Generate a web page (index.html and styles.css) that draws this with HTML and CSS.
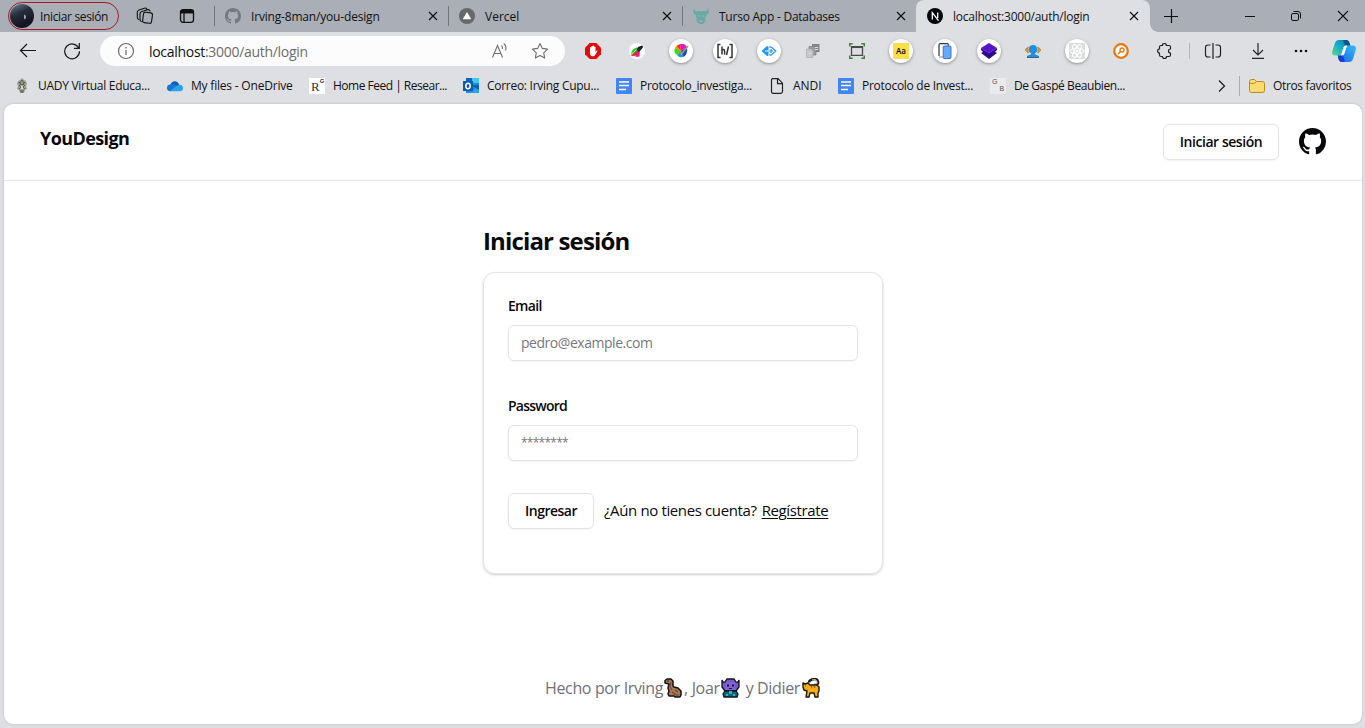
FILE: index.html
```html
<!DOCTYPE html>
<html lang="es">
<head>
<meta charset="utf-8">
<title>localhost:3000/auth/login</title>
<link rel="stylesheet" href="styles.css">
</head>
<body>
<div class="browser">
  <div class="tabbar">
    <div class="profile"><span class="avatar"></span><span class="profile-name">Iniciar sesión</span></div>
    <svg class="workspaces" width="18" height="18" viewBox="0 0 18 18" fill="none" stroke="#111" stroke-width="1.1" stroke-linejoin="round" stroke-linecap="round"><rect x="7" y="5.500" width="9" height="10.500" rx="2" transform="rotate(8 11.500 11)"/><path d="M5.300 14.500Q4 14 4 12.500V7Q4 5 5.800 4.500L11.500 2.700Q13.300 2.200 14 4M2.800 12.500Q1.300 12 1.300 10.500V5.500Q1.300 3.700 3 3L8.300 1.200Q10 .700 10.800 2"/></svg>
    <svg class="tabactions" width="16" height="16" viewBox="0 0 16 16" fill="none" stroke="#111" stroke-width="1.3"><rect x="1.500" y="1.700" width="13" height="12.600" rx="2.500"/><path d="M1.500 3.700h13" stroke-width="3.500"/><path d="M5 5v9"/></svg>
    <div class="tab">
      <svg width="16" height="16" viewBox="0 0 16 16" fill="#747982"><path d="M8 0C3.580 0 0 3.580 0 8c0 3.540 2.290 6.530 5.470 7.590.4.070.55-.17.55-.38v-1.490c-2.010.37-2.530-.49-2.690-.94-.09-.23-.48-.94-.82-1.130-.28-.15-.68-.52-.01-.53.63-.01 1.080.58 1.230.82.72 1.210 1.870.87 2.330.66.070-.52.28-.87.51-1.070-1.780-.2-3.640-.89-3.640-3.950 0-.87.31-1.590.82-2.150-.08-.2-.36-1.020.08-2.120 0 0 .67-.21 2.200.82a7.500 7.500 0 0 1 4 0c1.530-1.040 2.200-.82 2.200-.82.44 1.100.16 1.920.08 2.120.51.56.82 1.270.82 2.150 0 3.070-1.870 3.750-3.650 3.950.29.25.54.73.54 1.480v2.200c0 .21.15.46.55.38A8 8 0 0 0 16 8c0-4.420-3.580-8-8-8z"/></svg>
      <span class="tab-title t1">Irving-8man/you-design</span>
      <svg class="close" width="10" height="10" viewBox="0 0 10 10" stroke="#111" stroke-width="1.200"><path d="m1 1 8 8M9 1 1 9"/></svg>
    </div>
    <div class="tab">
      <svg width="16" height="16" viewBox="0 0 16 16"><circle cx="8" cy="8" r="8" fill="#666869"/><path d="m8 4 4.300 7.200H3.700z" fill="#fff"/></svg>
      <span class="tab-title t2">Vercel</span>
      <svg class="close" width="10" height="10" viewBox="0 0 10 10" stroke="#111" stroke-width="1.200"><path d="m1 1 8 8M9 1 1 9"/></svg>
    </div>
    <div class="tab">
      <svg width="16" height="16" viewBox="0 0 16 16"><path d="M1.500.5 2 3l2 .5 1-1 3 1 3-1 1 1 2-.5.500-2.500L16 3.500l-1 2.500-2 .5.500 1.500-1 1v4L10 16H6l-2.500-3V9l-1-1L3 6.500 1 6 0 3.500z" fill="#68aaa5"/><path d="m4.800 7 2 .8v1l-2-.5zm6.400 0-2 .8v1l2-.5zM6 12.500h4l-1 1.500H7z" fill="#aaaeb6"/></svg>
      <span class="tab-title t3">Turso App - Databases</span>
      <svg class="close" width="10" height="10" viewBox="0 0 10 10" stroke="#111" stroke-width="1.200"><path d="m1 1 8 8M9 1 1 9"/></svg>
    </div>
    <div class="tab active">
      <svg width="16" height="16" viewBox="0 0 16 16"><circle cx="8" cy="8" r="8" fill="#050505"/><path d="M5.300 11.500V4.700l6.200 8M10.700 4.500v5.500" fill="none" stroke="#fff" stroke-width="1.300"/></svg>
      <span class="tab-title t4">localhost:3000/auth/login</span>
      <svg class="close" width="10" height="10" viewBox="0 0 10 10" stroke="#111" stroke-width="1.200"><path d="m1 1 8 8M9 1 1 9"/></svg>
    </div>
    <svg class="newtab" width="14" height="14" viewBox="0 0 14 14" stroke="#111" stroke-width="1.200"><path d="M7.500 0v14M0 7.500h14"/></svg>
    <div class="window-controls">
      <svg width="10" height="10" viewBox="0 0 10 10" stroke="#111"><path d="M0 5.500h10"/></svg>
      <svg width="12" height="12" viewBox="0 0 12 12" fill="none" stroke="#111"><rect x="1.500" y="3.500" width="7" height="7" rx="1.500"/><path d="M3.500 1.500H8a2.500 2.500 0 0 1 2.500 2.500v4.500"/></svg>
      <svg width="12" height="12" viewBox="0 0 12 12" stroke="#111" stroke-width="1.100"><path d="m1 1 10 10M11 1 1 11"/></svg>
    </div>
  </div>

  <div class="toolbar">
    <svg class="back" width="18" height="16" viewBox="0 0 18 16" fill="none" stroke="#151515" stroke-width="1.200"><path d="M17 7.500H1.500M8 1 1.500 7.500 8 14"/></svg>
    <svg class="reload" width="18" height="18" viewBox="0 0 18 18" fill="none" stroke="#151515" stroke-width="1.200"><path d="M15.800 6.200A7.400 7.400 0 1 0 16.500 9.300M16.300 1v5.300H11"/></svg>
    <div class="address">
      <svg width="18" height="18" viewBox="0 0 18 18" fill="none" stroke="#6b6b6b" stroke-width="1.200"><circle cx="9" cy="9" r="7.500"/><path d="M9 8v5M9 5v1.500"/></svg>
      <span class="url"><b>localhost</b>:3000/auth/login</span>
      <svg class="read" width="18" height="18" viewBox="0 0 18 18" fill="none" stroke="#707070" stroke-width="1.100"><path d="m1.500 15.500 5-12 5 12M3.300 11.500h6.500M10.500 3.500q1.500 1.500.8 3.500M12.700 1.500q3.300 2.800 1.800 7"/></svg>
      <svg class="star" width="18" height="18" viewBox="0 0 18 18" fill="none" stroke="#707070" stroke-width="1.100" stroke-linejoin="round"><path d="m9 1.500 2.300 4.900 5.300.7-3.900 3.700 1 5.300L9 13.500l-4.700 2.600 1-5.300-3.900-3.700 5.300-.7z"/></svg>
    </div>
    <div class="extensions">
      <div class="ext"><svg width="16" height="16" viewBox="0 0 16 16"><path d="M4.700 0h6.600L16 4.700v6.600L11.300 16H4.700L0 11.300V4.700z" fill="#e40b0b"/><path d="M5 8V4.500q.7-.8 1.300 0V7 3.300q.7-.8 1.400 0V7 2.800q.7-.8 1.400 0V7 4q.7-.8 1.400 0v5l1-1.300q1-.4 1 .4L9.800 12.500q-.5.700-1.500.7H7.300Q5 13 5 10z" fill="#fff"/></svg></div>
      <div class="ext"><svg width="16" height="16" viewBox="0 0 16 16"><circle cx="8" cy="8" r="8" fill="#fff"/><path d="M2 12.500Q2 5.500 8 4.500L9 8z" fill="#12d83b"/><path d="M2 12.500 9 7l1 3q-2 3-6 3z" fill="#f0163c"/><path d="m9 7 2 0-.5 6.500-4 .5z" fill="#f0198a"/><path d="m7.500 6.500 1.500-2.500 4-1.500 1.200 1.200-2 3L9.500 9z" fill="#16251a"/><path d="m2.500 11.500 5-5" stroke="#ffec38" stroke-width=".8"/></svg></div>
      <div class="ext round"><svg width="15" height="14" viewBox="0 0 15 14"><path d="m7 7-6-3q2-4 5-3z" fill="#ff8a00"/><path d="M7 7 6 0q5-1 7 3z" fill="#ea14d0"/><path d="m7 7-6-3q-2 5 2 7z" fill="#35dc10"/><path d="m7 7-4 4q2 3 6 2z" fill="#20a3ba"/><path d="m7 7 6-4q1 8-4 10z" fill="#213ddd"/><path d="m7 7-4-5 3-2z" fill="#ff2920"/><path d="m5 7 2.500 3L14 2" fill="none" stroke="#92a65a" stroke-width="1.600"/></svg></div>
      <div class="ext round"><svg width="18" height="18" viewBox="0 0 18 18" fill="none" stroke="#333" stroke-width="1.500"><path d="M4.500 2.500H2v13h2.500M13.500 2.500H16v13h-2.500M6 4.500v8M6 9q0-1.500 1.300-1.500T8.600 9v3.500M12.500 4.500l-2 8.500"/></svg></div>
      <div class="ext round"><svg width="18" height="14" viewBox="0 0 18 14"><path d="m1.500 7 5-4.500Q8.500 1 8.500 3.500v7q0 2.500-2 1z" fill="#2196f3"/><path d="M9.800 4q0-2 1.700-.7L15.800 7l-4.300 3.700q-1.700 1.300-1.700-.7" fill="none" stroke="#2196f3" stroke-width="1.200"/><path d="M9 7h4M11 5v4" stroke="#2196f3" stroke-width="1.200"/><path d="M5 7h3.500" stroke="#fff"/></svg></div>
      <div class="ext"><svg width="14" height="14" viewBox="0 0 14 14"><path d="M6 0h7.500v8H6z" fill="#858585"/><path d="M3 2.500h7V11H3z" fill="#9c9c9c" stroke="#7c7c7c" stroke-width=".7"/><path d="M.5 5H5l2 2v6.500H.5z" fill="#c8c8c8" stroke="#aaa" stroke-width=".7"/><path d="M9 3.500h3M9 5.500h3M3 9.500h2" stroke="#dedede"/></svg></div>
      <div class="ext"><svg width="16" height="16" viewBox="0 0 16 16" fill="none"><path d="M.7 3.500V.7h3M12.300.7h3v2.800M15.300 12.500v2.800h-3M3.700 15.300h-3v-2.800" stroke="#3b8538" stroke-width="1.500"/><path d="M2.500 3.700h11v8.600h-11z" stroke="#484b49" stroke-width="1.300"/><path d="M2.500 4.200h11" stroke="#484b49" stroke-width="1.700"/></svg></div>
      <div class="ext round"><span class="aa">Aa</span></div>
      <div class="ext round"><svg width="16" height="16" viewBox="0 0 16 16"><path d="M2 13V2q0-1.300 1.300-1.300h7q1 0 1 1.300v1" fill="#fff" stroke="#293444" stroke-width="1.200"/><path d="M2 13v2h4v-2z" fill="#c5c9cd"/><rect x="6.200" y="3" width="7.800" height="12.500" rx="1" fill="#68a9f9" stroke="#3d76bc"/></svg></div>
      <div class="ext round"><svg width="18" height="18" viewBox="0 0 18 18"><path d="m9 1 8 5-8 5-8-5z" fill="#5712cf"/><path d="m1 6 8 5 8-5v2l-2 2 2 1-8 6-8-6 2-1-2-2z" fill="#32089a"/><path d="m3 10 6 4 6-4" fill="none" stroke="#220671" stroke-width=".8"/></svg></div>
      <div class="ext"><svg width="16" height="15" viewBox="0 0 16 15"><path d="m3.500 3-3 3 3 3M12.500 3l3 3-3 3M3 4.500v3M13 4.500v3" fill="none" stroke="#bc8626" stroke-width="1.300"/><path d="M4 4.500Q4 1 8 1t4 3.500v3L9.500 10 14 12v2H2v-2l4.500-2L4 7.500z" fill="#218ee2"/><path d="M2 13h12v1H2z" fill="#246795"/></svg></div>
      <div class="ext round"><svg width="18" height="18" viewBox="0 0 18 18" fill="none" stroke="#fff"><path d="M1 1h16v16H1z" fill="#dcdddd" stroke="none"/><ellipse cx="9" cy="9" rx="7" ry="2.700"/><ellipse cx="9" cy="9" rx="7" ry="2.700" transform="rotate(60 9 9)"/><ellipse cx="9" cy="9" rx="7" ry="2.700" transform="rotate(120 9 9)"/><circle cx="9" cy="9" r="1" fill="#fff"/></svg></div>
      <div class="ext"><svg width="16" height="16" viewBox="0 0 16 16"><circle cx="8" cy="8" r="6.800" fill="#fff" stroke="#e9770b" stroke-width="2.200"/><circle cx="9" cy="7" r="2" fill="none" stroke="#e9770b" stroke-width="1.300"/><path d="M7.600 8.400 5 11" stroke="#e9770b" stroke-width="1.400"/></svg></div>
      <div class="ext"><svg width="16" height="18" viewBox="0 0 16 18" fill="none" stroke="#202020" stroke-width="1.200" stroke-linejoin="round"><path d="M5.500 3.500q-.3-2 1.800-2t2 2H12q1.500 0 1.500 1.500v2q-2 0-2 2t2 2v2q0 1.500-1.500 1.500H9.500q0 2-2 2t-2-2H4q-1.500 0-1.500-1.500v-2q-1.800 0-1.800-2t1.800-2V5q0-1.500 1.500-1.500z"/></svg></div>
    </div>
    <div class="actions">
      <svg width="18" height="16" viewBox="0 0 18 16" fill="none" stroke="#202020" stroke-width="1.200"><path d="M6.500 2H4Q1.500 2 1.500 4.500v7Q1.500 14 4 14h2.500M11.500 2H14q2.500 0 2.500 2.500v7Q16.500 14 14 14h-2.500M9 0v16"/></svg>
      <svg width="14" height="16" viewBox="0 0 14 16" fill="none" stroke="#252525" stroke-width="1.200"><path d="M7 0v12M2 7l5 5 5-5M1 15.400h12"/></svg>
      <svg width="14" height="4" viewBox="0 0 14 4" fill="#111"><circle cx="2" cy="2" r="1.300"/><circle cx="7" cy="2" r="1.300"/><circle cx="12" cy="2" r="1.300"/></svg>
    </div>
    <svg class="copilot" width="24" height="22" viewBox="0 0 24 22"><defs><linearGradient id="left" x1="1" y1="0" x2="0" y2="1"><stop stop-color="#1471ad"/><stop offset=".5" stop-color="#13acca"/><stop offset="1" stop-color="#62da87"/></linearGradient><linearGradient id="right" x1="1" y1="0" x2="0" y2="1"><stop stop-color="#34bcf5"/><stop offset="1" stop-color="#1765ec"/></linearGradient></defs><path d="M7 0h7q2.500 0 3.500 3l.8 2.500H14q-2 0-2.500 2L9.800 13q-.8 2.500-3 2.500H3q-4 0-2.700-4.500L3 3q1-3 4-3" fill="url(#left)"/><path d="M17 22h-7q-2.500 0-3.500-3l-.8-3.500H10q2 0 2.500-2L14.200 8q.8-2.500 3-2.500H21q4 0 2.700 4.500L21 19q-1 3-4 3" fill="url(#right)"/><path d="M6 15.500h3.500q.8 0 1.300-.5L13 22h-3q-2.500 0-3.500-3z" fill="#173cce"/><path d="M11 0h3q2.500 0 3.500 3l.8 2.500H14l-1 .4z" fill="#075589"/><path d="m11.500 7.500 1.500-2h1.800L12.500 13l-1.200 2.200H9.200z" fill="#f2f7fb"/></svg>
  </div>

  <div class="bookmarks">
    <div class="bookmark"><svg width="16" height="16" viewBox="0 0 16 16"><path d="m8 0 2 2 2 1 1 3-1 2 1 3-2 1-1 3H6l-1-3-2-1 1-3-1-2 1-3 2-1z" fill="#9c9d94"/><path d="m8 2 2 3-2 2-2-2zm-3 5 2 2-2 2m6-4L9 9l2 2m-4 1v2h2v-2M5 4l2 3m4-3L9 7" fill="none" stroke="#4e5149" stroke-width=".8"/><path d="M7 8h2v3H7z" fill="#dddcc9"/></svg><span class="m1">UADY Virtual Educa...</span></div>
    <div class="bookmark"><svg width="16" height="12" viewBox="0 0 17 12"><path d="M3.500 5Q5 .5 9 1q2.500.3 4 3.500l-6 5z" fill="#0a60ba"/><path d="M4 4.500Q0 4.500 0 8t4 3.500l8-5Q8 3 4 4.500" fill="#1477d4"/><path d="M3 11.500 10 6q6-3.500 7 2 0 3.500-3.500 3.500z" fill="#2aa3ed"/></svg><span class="m2">My files - OneDrive</span></div>
    <div class="bookmark"><span class="rg">R<sup>G</sup></span><span class="m3">Home Feed | Resear...</span></div>
    <div class="bookmark"><svg width="16" height="16" viewBox="0 0 16 16"><path d="M3 0h13v15H3z" fill="#188dde"/><path d="M3 0h6v5H3z" fill="#1066b5"/><path d="M9 0h7v5H9z" fill="#43c5f7"/><path d="m7 15 9-7v7z" fill="#29a5eb"/><path d="m8 7 8 5V7z" fill="#1261ad"/><path d="M0 3h10v10H0z" fill="#0e5bb0"/><ellipse cx="5" cy="8" rx="2.200" ry="2.700" fill="none" stroke="#fff" stroke-width="1.500"/></svg><span class="m4">Correo: Irving Cupu...</span></div>
    <div class="bookmark"><svg width="16" height="16" viewBox="0 0 16 16"><rect width="16" height="16" rx="1" fill="#4285f4"/><path d="M3 4h10M3 7.500h10M3 11.500h7" stroke="#fff" stroke-width="1.700"/></svg><span class="m5">Protocolo_investiga...</span></div>
    <div class="bookmark"><svg width="16" height="16" viewBox="0 0 16 16" fill="none" stroke="#222" stroke-width="1.200"><path d="M3 .7h6l4.500 4.500v8.300q0 1.800-1.800 1.800H4.300q-1.800 0-1.800-1.800V2q0-1.300 1.300-1.300M8.500.7v5h5"/></svg><span class="m6">ANDI</span></div>
    <div class="bookmark"><svg width="16" height="16" viewBox="0 0 16 16"><rect width="16" height="16" rx="1" fill="#4285f4"/><path d="M3 4h10M3 7.500h10M3 11.500h7" stroke="#fff" stroke-width="1.700"/></svg><span class="m7">Protocolo de Invest...</span></div>
    <div class="bookmark"><span class="gb"><i>G</i><i>B</i></span><span class="m8">De Gaspé Beaubien...</span></div>
    <svg class="chevron" width="8" height="12" viewBox="0 0 8 12" fill="none" stroke="#222" stroke-width="1.300"><path d="m1 .5 5.500 5.500L1 11.500"/></svg>
    <div class="other"><svg width="16" height="14" viewBox="0 0 16 14" stroke="#b98a1c"><path d="M.5 2.500Q.5.500 2.500.5h3l2 2h6q2 0 2 2v7q0 2-2 2h-11q-2 0-2-2z" fill="#ffdb72"/><path d="M.5 4.300h5l2-1.800" fill="none"/></svg><span class="m9">Otros favoritos</span></div>
  </div>

  <div class="page">
    <header class="header">
      <span class="brand">YouDesign</span>
      <nav class="nav">
        <button class="button login">Iniciar sesión</button>
        <svg width="27" height="27" viewBox="0 0 16 16" fill="#09090b"><path d="M8 0C3.580 0 0 3.580 0 8c0 3.540 2.290 6.530 5.470 7.590.4.070.55-.17.55-.38v-1.490c-2.010.37-2.530-.49-2.690-.94-.09-.23-.48-.94-.82-1.130-.28-.15-.68-.52-.01-.53.63-.01 1.080.58 1.230.82.72 1.210 1.870.87 2.330.66.070-.52.28-.87.51-1.070-1.780-.2-3.640-.89-3.640-3.950 0-.87.31-1.590.82-2.150-.08-.2-.36-1.020.08-2.120 0 0 .67-.21 2.200.82a7.500 7.500 0 0 1 4 0c1.530-1.040 2.200-.82 2.200-.82.44 1.100.16 1.920.08 2.120.51.56.82 1.270.82 2.150 0 3.070-1.870 3.750-3.650 3.950.29.25.54.73.54 1.480v2.200c0 .21.15.46.55.38A8 8 0 0 0 16 8c0-4.420-3.580-8-8-8z"/></svg>
      </nav>
    </header>
    <main class="main">
      <h1><span>Iniciar sesión</span></h1>
      <form class="card">
        <label class="field"><span class="label email">Email</span><input type="email" class="in-email" placeholder="pedro@example.com"></label>
        <label class="field"><span class="label pass">Password</span><input type="password" class="in-pass" placeholder="********"></label>
        <div class="submit"><button type="button" class="button enter">Ingresar</button><p><span class="question">¿Aún no tienes cuenta?</span><a>Regístrate</a></p></div>
      </form>
    </main>
    <footer class="footer">
      <span class="f1">Hecho por Irving</span>
      <svg width="20" height="20" viewBox="0 0 20 20"><path d="M2 2.500 4 1h4l2 2v5l1 1 4 1 3 3v4l-1 2h-5l-1-1H6l-1-2 1-3-1-3 1-4-4-1z" fill="#a77955" stroke="#171212" stroke-width="1.500" stroke-linejoin="round"/><path d="m8 4-1 5 2 3M9 14l4 3h3M12 12l3 2" fill="none" stroke="#6b4633" stroke-width="1.100"/><circle cx="5" cy="3" r=".8" fill="#111"/></svg>
      <span class="f2">, Joar</span>
      <svg width="19" height="20" viewBox="0 0 19 20"><path d="M1 2q1 3 3 2l2-3h7l2 3q2 1 3-2v7l-3 4H4L1 9z" fill="#7759c8" stroke="#15121d" stroke-width="1.300"/><path d="M5 4h9v8H5z" fill="#8062da"/><path d="M6 6.500h2v2H6zm5 0h2v2h-2zM8 10h3v1H8z" fill="#1c1031"/><path d="M4 13h11l2 3-1 3H3l-1-3z" fill="#176573" stroke="#111722" stroke-width="1.300"/><path d="M8 13h3v3H8zM5 16h2v2H5zm7 0h2v2h-2z" fill="#19b9c8"/></svg>
      <span class="f3">y Didier</span>
      <svg width="20" height="20" viewBox="0 0 20 20"><path d="M13 7q5 0 4-3.500T11 1.500q-3 1-3 3" fill="none" stroke="#1b1610" stroke-width="2.400"/><path d="M13 6.500q4 0 3-3t-5-1.500" fill="none" stroke="#d8d2c4" stroke-width=".9"/><path d="m2 5 2 1 3-1 2 2h7l2 2v4l-1 2v4h-3l-1-4H9l-1 4H5l1-6-3-1-1-3z" fill="#f7ad13" stroke="#1b1610" stroke-width="1.400" stroke-linejoin="round"/><path d="m10 8 1 2m2-2 1 2M4 8h1" stroke="#87520e"/></svg>
    </footer>
  </div>
</div>
</body>
</html>
```
FILE: styles.css
```css
* { box-sizing: border-box; }
body { margin: 0; overflow: hidden; font-family: "Open Sans", "Noto Sans", sans-serif; color: #09090b; }
svg { display: block; flex-shrink: 0; }
span { white-space: nowrap; }
.browser { width: 1365px; height: 728px; background: #dedfe3; display: flex; flex-direction: column; }

.tabbar { height: 32px; flex: none; display: flex; align-items: center; background: #aaaeb6; font-size: 12px; color: #111; }
.profile { width: 111px; height: 28px; margin-left: 8px; border: 1px solid #ad1820; border-radius: 14px; display: flex; align-items: center; gap: 6px; padding-left: 1px; }
.avatar { width: 24px; height: 24px; flex: none; border-radius: 50%; background: radial-gradient(ellipse 1px 3px at 62% 54%, #a0a3ab 0 60%, transparent), linear-gradient(155deg, #687d8d 5%, #262e3c 38%, #151723 75%); }
.profile-name { letter-spacing: -.35px; }
.workspaces { margin-left: 17px; }
.tabactions { margin-left: 25px; }
.tab { width: 234px; height: 32px; display: flex; align-items: center; padding: 0 11px 0 10px; gap: 10px; position: relative; flex: none; }
.tabactions + .tab { margin-left: 20px; }
.tab::before { content: ""; position: absolute; left: -1px; top: 6px; width: 1px; height: 20px; background: #707378; }
.tab .close { margin-left: auto; }
.t1 { letter-spacing: -.18px; }
.t3, .t4 { letter-spacing: -.24px; }
.tab.active { background: #dedfe3; border-radius: 8px 8px 0 0; margin-left: -1px; padding-left: 11px; }
.tab.active::before { display: none; }
.tab.active::after { content: ""; position: absolute; right: -8px; bottom: 0; width: 8px; height: 8px; background: radial-gradient(circle at 100% 0, transparent 7.500px, #dedfe3 8px); }
.newtab { margin-left: 14px; }
.window-controls { margin-left: auto; padding-right: 16px; display: flex; align-items: center; gap: 35px; }

.toolbar { height: 38px; flex: none; display: flex; align-items: center; }
.back { margin-left: 19px; }
.reload { margin-left: 26px; }
.address { width: 465px; height: 30px; margin-left: 19px; border-radius: 15px; background: #fcfcfd; display: flex; align-items: center; padding: 0 16px 0 17px; }
.url { margin-left: 14px; font-size: 14px; color: #6c6c6c; letter-spacing: -.3px; }
.url b { font-weight: 400; color: #111; }
.read { margin-left: auto; }
.star { margin-left: 22px; }
.extensions { display: flex; margin-left: 6px; }
.ext { width: 44px; height: 30px; display: grid; place-items: center; position: relative; }
.ext > * { position: relative; }
.ext.round::before { content: ""; position: absolute; left: 10px; top: 3px; width: 24px; height: 24px; border-radius: 50%; background: #fff; box-shadow: 0 1px 3px #777c; }
.aa { width: 16px; height: 16px; background: #fddf4b; font: 600 8px/16px "Open Sans", sans-serif; text-align: center; }
.actions { display: flex; align-items: center; gap: 29px; border-left: 1px solid #b5b7bb; padding-left: 14px; margin-left: 2px; height: 16px; }
.copilot { margin-left: 24px; }

.bookmarks { height: 34px; flex: none; display: grid; grid-template-columns: 153px 142px 154px 153px 153px 69px 152px 213px 30px 1fr; align-items: center; padding: 0 0 3px 14px; font-size: 12px; color: #111; }
.bookmark, .other { display: flex; align-items: center; gap: 8px; }
.m1, .m4, .m5, .m7 { letter-spacing: -.28px; }
.m2 { letter-spacing: -.2px; }
.m3 { letter-spacing: -.5px; }
.m8 { letter-spacing: -.42px; }
.m9 { letter-spacing: -.35px; }
.chevron { margin-left: 15px; }
.other { border-left: 1px solid #aaacaf; height: 20px; padding-left: 9px; margin-left: 6px; }
.rg, .gb { width: 16px; height: 16px; flex: none; background: #fff; color: #333; font: 13px/17px "Liberation Serif", serif; display: flex; padding-left: 2px; }
.rg sup { font: bold 6px/7px "Liberation Sans", sans-serif; }
.gb { background: #ebebeb; font: 7px/8px "Liberation Sans", sans-serif; color: #555; gap: 2px; }
.gb i { font-style: normal; }
.gb i + i { padding-top: 7px; }

.page { width: 1358px; height: 620px; margin-left: 4px; background: #fff; border-radius: 9px; box-shadow: 0 0 2px #8888; display: flex; flex-direction: column; }
.header { height: 77px; flex: none; border-bottom: 1px solid #e4e4e7; display: flex; justify-content: space-between; align-items: flex-start; padding: 20px 36px 0; }
.brand { font-size: 18px; font-weight: 700; line-height: 28px; letter-spacing: -.6px; }
.nav { display: flex; align-items: center; gap: 20px; }
.nav svg { margin-bottom: 1px; }
.button { height: 36px; border: 1px solid #e4e4e7; border-radius: 6px; background: #fff; box-shadow: 0 1px 2px #0000000d; font: 600 14px/20px "Open Sans", sans-serif; color: #09090b; padding: 0; white-space: nowrap; }
.login { width: 116px; letter-spacing: -.45px; }
.main { width: 400px; margin: 44px 0 0 479px; }
h1 { margin: 0; font-size: 24px; line-height: 32px; font-weight: 700; letter-spacing: -.85px; }
.card { height: 302px; margin-top: 15px; border: 1px solid #e4e4e7; border-radius: 12px; box-shadow: 0 1px 3px #0000001a, 0 1px 2px #0000001a; padding: 23px 24px 24px; display: flex; flex-direction: column; }
.field { display: flex; flex-direction: column; margin-bottom: 32px; }
.label { font-size: 14px; line-height: 20px; font-weight: 600; margin-bottom: 9px; letter-spacing: -.75px; }
.email { letter-spacing: -.7px; }
input { height: 36px; padding: 0 12px 2px; border: 1px solid #e4e4e7; border-radius: 6px; box-shadow: 0 1px 2px #0000000d; font: 14px "Open Sans", sans-serif; background: #fff; margin-bottom: 3px; }
input::placeholder { color: #77777d; }
.in-email { letter-spacing: -.46px; }
.in-pass { font-size: 12px; letter-spacing: -.75px; }
.submit { display: flex; align-items: center; gap: 10px; margin-top: -3px; }
.submit p { margin: 0; display: flex; gap: 5px; font-size: 15px; letter-spacing: -.37px; white-space: nowrap; position: relative; top: -1px; }
.submit a { text-decoration: underline; text-underline-offset: 2px; }
.enter { width: 86px; letter-spacing: -.5px; }
.footer { margin: auto 0 24px; display: flex; justify-content: center; align-items: center; font-size: 16px; line-height: 24px; color: #71717a; letter-spacing: -.35px; }
.f2 { margin-left: 1px; margin-right: 1px; }
.f3 { margin: 0 1px 0 6px; }
```
